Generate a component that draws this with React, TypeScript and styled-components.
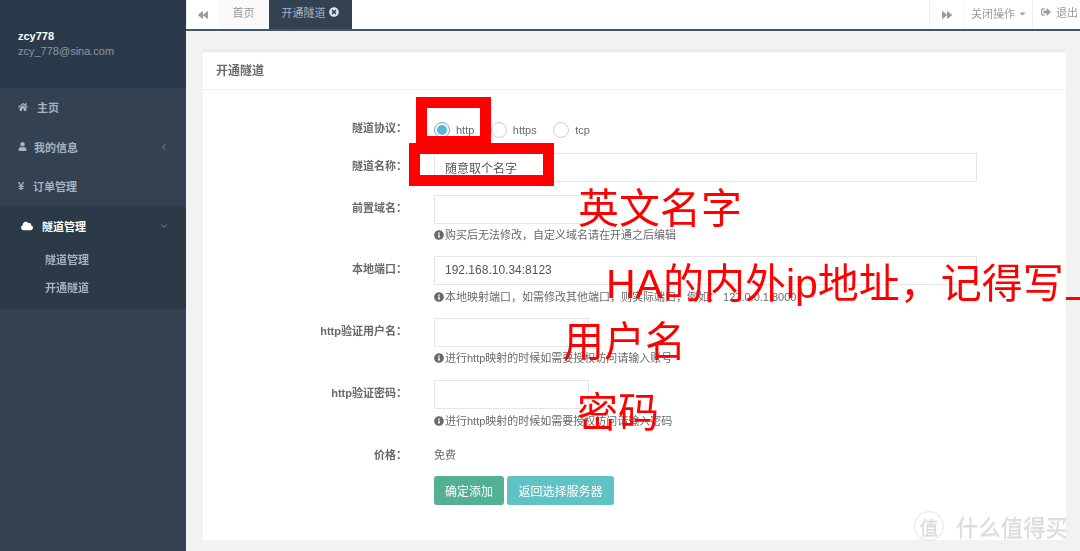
import React from "react";
import styled, { createGlobalStyle } from "styled-components";
import { FaHome, FaUser, FaCloud, FaBackward, FaForward, FaTimesCircle, FaSignOutAlt, FaInfoCircle, FaCaretDown } from "react-icons/fa";
import { ChevronLeft, ChevronDown } from "lucide-react";

const Global = createGlobalStyle`
  html, body { margin: 0; padding: 0; }
  body { width: 1080px; height: 551px; overflow: hidden; background: #f2f2f2;
    font-family: "Liberation Sans", "Noto Sans CJK SC", sans-serif; font-size: 11px; color: #676a6c; }
`;
const Page = styled.div`
  position: relative; display: flex; width: 1080px; height: 551px; overflow: hidden; filter: blur(0.5px);
`;
const Sidebar = styled.aside`
  width: 185.5px; flex: none; background: #334150; display: flex; flex-direction: column;
`;
const Profile = styled.div`
  height: 88px; box-sizing: border-box; padding: 30px 18px 0; background: #2b3a4a;
  display: flex; flex-direction: column; gap: 2px;
`;
const UserName = styled.strong`font-size: 11px; line-height: 13px; color: #fff;`;
const UserMail = styled.span`font-size: 11px; line-height: 13px; color: #8b97a5;`;
const NavItem = styled.div<{ $indent: number }>`
  height: 39.5px; display: flex; align-items: center; padding: 0 18px; gap: ${p => p.$indent}px;
  color: #a7b1c2; font-size: 11px; font-weight: 700; box-sizing: border-box; padding-bottom: 1px;
`;
const NavGroup = styled.div`background: #2c3947; height: 102px; display: flex; flex-direction: column;`;
const NavActive = styled(NavItem)`
  color: #fff; padding-left: 21px; gap: 9px; padding-bottom: 0;
`;
const Chevron = styled.span`margin-left: auto; display: flex; color: #a7b1c2; margin-right: -1px;`;
const SubNav = styled.div`
  display: flex; flex-direction: column; padding: 4px 0 0 45px; gap: 8px;
`;
const SubItem = styled.div`font-size: 11px; line-height: 20px; font-weight: 700; color: #a7b1c2;`;
const Yen = styled.span`font-size: 11px; width: 7px;`;
const Main = styled.main`flex: 1; min-width: 0; display: flex; flex-direction: column;`;
const TopBar = styled.header`
  height: 29px; flex: none; display: flex; background: #fff; border-bottom: 2px solid #46566a; color: #999c9e;
`;
const BarBtn = styled.div<{ $w: number; $lift?: number; $pad?: number; $gap?: number }>`
  width: ${p => p.$w}px; flex: none; display: flex; align-items: center; justify-content: center; gap: ${p => p.$gap ?? 3}px; font-size: 11px;
  border-left: 1px solid #f1f1f1; box-sizing: border-box;
  padding-bottom: ${p => p.$lift ?? 0}px; padding-left: ${p => p.$pad ?? 0}px;
`;
const Tab = styled.div<{ $active?: boolean; $w: number }>`
  width: ${p => p.$w}px; flex: none; display: flex; align-items: center; justify-content: center; gap: 3px; padding-bottom: 5px; box-sizing: border-box;
  background: ${p => (p.$active ? "#334150" : "#fafafa")}; color: ${p => (p.$active ? "#a7b1c2" : "#999c9e")};
`;
const Spacer = styled.div`flex: 1;`;
const Content = styled.div`padding: 17.5px 14px 0 17.5px; flex: 1;`;
const Panel = styled.section`
  background: #fff; border-top: 3px solid #e9eaec; height: 491px; box-sizing: border-box;
`;
const PanelHead = styled.h5`
  margin: 0; height: 38px; padding: 0 13px 2px; box-sizing: border-box; display: flex; align-items: center; font-size: 12px; font-weight: 700; color: #676a6c;
  border-bottom: 1px solid #eef0f1;
`;
const Form = styled.form`
  display: grid; grid-template-columns: 204px 1fr; column-gap: 27px; padding-top: 25px;
`;
const Label = styled.label<{ $mb: number; $lh?: number }>`
  text-align: right; font-weight: 700; font-size: 11px; line-height: ${p => p.$lh ?? 27}px; height: 29px; margin-bottom: ${p => p.$mb}px;
  white-space: nowrap;
`;
const Field = styled.div<{ $mb: number }>`
  margin-bottom: ${p => p.$mb}px; display: flex; flex-direction: column; align-items: flex-start;
`;
const Input = styled.input<{ $w: number }>`
  width: ${p => p.$w}px; height: 29px; box-sizing: border-box; border: 1px solid #e5e6e7; background: #fff; padding: 0 10px;
  font: 12px "Liberation Sans", "Noto Sans CJK SC", sans-serif; color: #555; outline: none;
`;
const Help = styled.span<{ $top: number }>`
  height: 18px; margin-top: ${p => p.$top}px; font-size: 11px; line-height: 14px; color: #676a6c; display: flex; align-items: center; gap: 1px; white-space: nowrap;
  svg { font-size: 10px; }
`;
const Radios = styled.div`display: flex; align-items: center; height: 30px; gap: 16.5px;`;
const Radio = styled.span`display: flex; align-items: center; gap: 6px; font-size: 11px;`;
const Dot = styled.span<{ $on?: boolean }>`
  width: 14px; height: 14px; border-radius: 50%; border: 1px solid ${p => (p.$on ? "#5bb5d8" : "#d0d0d0")}; background: #fff; position: relative; flex: none;
  &::after { content: ""; display: ${p => (p.$on ? "block" : "none")}; position: absolute; inset: 2px; border-radius: 50%; background: #5bb5d8; }
`;
const Buttons = styled.div`display: flex; gap: 3px;`;
const Btn = styled.button<{ $bg: string; $w: number }>`
  width: ${p => p.$w}px; height: 29px; border: 0; border-radius: 3px; background: ${p => p.$bg}; color: #fff; padding: 0;
  font: 12px "Noto Sans CJK SC", sans-serif;
`;
const PriceText = styled.div`line-height: 29px; font-size: 11px;`;
const RedBox = styled.div<{ $x: number; $y: number; $w: number; $h: number }>`
  position: absolute; left: ${p => p.$x}px; top: ${p => p.$y}px; width: ${p => p.$w}px; height: ${p => p.$h}px;
  box-sizing: border-box; border: 11px solid #ff0000;
`;
const RedText = styled.div<{ $x: number; $y: number }>`
  position: absolute; left: ${p => p.$x}px; top: ${p => p.$y}px; font-size: 41px; line-height: 1; color: #ff0000; white-space: nowrap;
  font-family: "Liberation Sans", "Noto Sans CJK SC", sans-serif; font-weight: 400;
`;
const Mark = styled.div`
  position: absolute; left: 914px; top: 510px; display: flex; align-items: center; gap: 12px; color: #dcdcdc;
  font: 22.4px "Noto Sans CJK SC", sans-serif; text-shadow: 0 1px 1px rgba(0,0,0,.1);
`;
const MarkCircle = styled.span`
  width: 28px; height: 28px; border-radius: 50%; border: 1px solid #e4e4e4; display: flex; align-items: center; justify-content: center; font-size: 19px;
`;

export default function App() {
  return (
    <Page>
      <Global />
      <Sidebar>
        <Profile>
          <UserName>zcy778</UserName>
          <UserMail>zcy_778@sina.com</UserMail>
        </Profile>
        <NavItem $indent={9}><FaHome size={10} />主页</NavItem>
        <NavItem $indent={7}><FaUser size={9} />我的信息<Chevron><ChevronLeft size={10} strokeWidth={1.5} /></Chevron></NavItem>
        <NavItem $indent={8}><Yen>¥</Yen>订单管理</NavItem>
        <NavGroup>
          <NavActive $indent={9}><FaCloud size={12} />隧道管理<Chevron><ChevronDown size={10} strokeWidth={1.5} /></Chevron></NavActive>
          <SubNav>
            <SubItem>隧道管理</SubItem>
            <SubItem>开通隧道</SubItem>
          </SubNav>
        </NavGroup>
      </Sidebar>
      <Main>
        <TopBar>
          <BarBtn $w={33}><FaBackward size={10} /></BarBtn>
          <Tab $w={50}>首页</Tab>
          <Tab $w={83} $active>开通隧道<FaTimesCircle size={10} color="#dfe4ed" /></Tab>
          <Spacer />
          <BarBtn $w={34}><FaForward size={10} /></BarBtn>
          <BarBtn $w={69} $pad={2} $lift={3}>关闭操作<FaCaretDown size={9} /></BarBtn>
          <BarBtn $w={48} $pad={6} $lift={5} $gap={5}><FaSignOutAlt size={10} />退出</BarBtn>
        </TopBar>
        <Content>
          <Panel>
            <PanelHead>开通隧道</PanelHead>
            <Form>
              <Label $mb={8}>隧道协议：</Label>
              <Field $mb={8}>
                <Radios>
                  <Radio><Dot $on />http</Radio>
                  <Radio><Dot />https</Radio>
                  <Radio><Dot />tcp</Radio>
                </Radios>
              </Field>
              <Label $mb={13}>隧道名称：</Label>
              <Field $mb={13}><Input $w={543} readOnly value="随意取个名字" /></Field>
              <Label $mb={13}>前置域名：</Label>
              <Field $mb={12}>
                <Input $w={155} />
                <Help $top={2}><FaInfoCircle />购买后无法修改，自定义域名请在开通之后编辑</Help>
              </Field>
              <Label $mb={13}>本地端口：</Label>
              <Field $mb={12}>
                <Input $w={543} readOnly value="192.168.10.34:8123" />
                <Help $top={3}><FaInfoCircle />本地映射端口，如需修改其他端口，则实际端口，例如： 127.0.0.1:8000</Help>
              </Field>
              <Label $mb={13}>http验证用户名：</Label>
              <Field $mb={13}>
                <Input $w={155} />
                <Help $top={2}><FaInfoCircle />进行http映射的时候如需要授权访问请输入账号</Help>
              </Field>
              <Label $mb={13}>http验证密码：</Label>
              <Field $mb={11}>
                <Input $w={155} />
                <Help $top={3}><FaInfoCircle />进行http映射的时候如需要授权访问请输入密码</Help>
              </Field>
              <Label $mb={6} $lh={29}>价格：</Label>
              <Field $mb={6}><PriceText>免费</PriceText></Field>
              <span />
              <Buttons>
                <Btn $bg="#53b092" $w={70}>确定添加</Btn>
                <Btn $bg="#5fc2c5" $w={107}>返回选择服务器</Btn>
              </Buttons>
            </Form>
          </Panel>
        </Content>
      </Main>
      <RedBox $x={416} $y={97} $w={75} $h={50} />
      <RedBox $x={409} $y={143} $w={145} $h={43} />
      <RedText $x={578} $y={189}>英文名字</RedText>
      <RedText $x={606} $y={264}>HA的内外ip地址，记得写上</RedText>
      <RedText $x={563} $y={322}>用户名</RedText>
      <RedText $x={577} $y={393}>密码</RedText>
      <Mark><MarkCircle>值</MarkCircle>什么值得买</Mark>
    </Page>
  );
}
